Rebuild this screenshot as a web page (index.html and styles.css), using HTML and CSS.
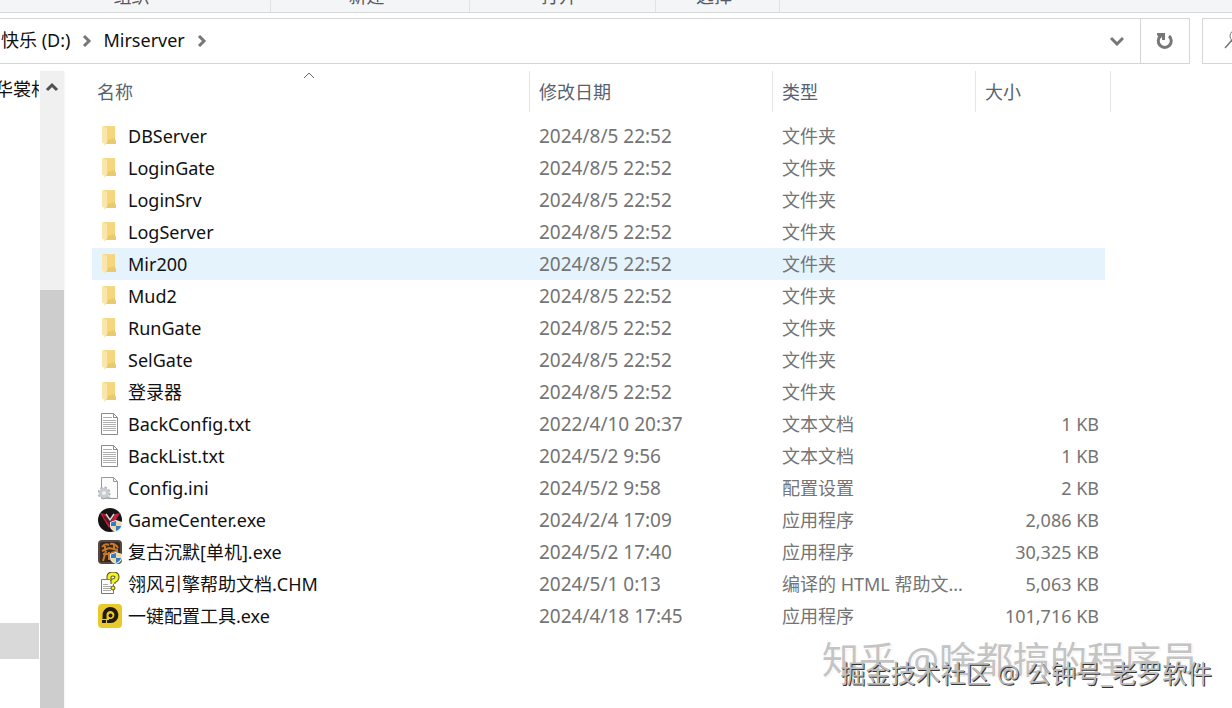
FILE: index.html
```html
<!DOCTYPE html>
<html lang="zh-CN">
<head>
<meta charset="utf-8">
<title>Mirserver</title>
<link rel="stylesheet" href="styles.css">
</head>
<body>
<svg class="defs" aria-hidden="true">
  <symbol id="folder" viewBox="0 0 24 24">
    <path d="M5 2h12v14l1 1v3H7z" fill="#f6d98a"/>
    <path d="M8 4l9-1v13l1 1v3H8z" fill="#f5d67f"/>
    <path d="M10 16l7-2v2l1 1v3H8z" fill="#ebc96c"/>
    <path d="M4 2l5 2v14l-2 4-1-2-2-2z" fill="#fae6ab"/>
  </symbol>
  <symbol id="text" viewBox="0 0 24 24">
    <path d="M3.500 1.500h12l4 4v17h-16z" fill="#fff" stroke="#8b8b8b"/>
    <path d="M15.500 1.500v4h4" fill="none" stroke="#8b8b8b"/>
    <path d="M5 5.500h9M5 8.500h13M5 10.500h13M5 12.500h13M5 14.500h13M5 16.500h13M5 18.500h13" stroke="#b0b0b0"/>
  </symbol>
  <symbol id="config" viewBox="0 0 24 24">
    <path d="M3.500 1.500h12l4 4v17h-16z" fill="#fbfbfb" stroke="#999"/>
    <path d="M15.500 1.500v4h4" fill="none" stroke="#999"/>
    <circle cx="6" cy="17" r="5" fill="#d4d9dc" stroke="#adb4b8" stroke-width="3" stroke-dasharray="2.200 1.700"/>
    <circle cx="6" cy="17" r="5" fill="#c6ccd0"/><circle cx="6" cy="17" r="2" fill="#eef1f2"/>
    <path d="M9 20l4 1-3 2z" fill="#b5bcc0"/>
  </symbol>
  <symbol id="shield" viewBox="0 0 12 12">
    <path d="M6 0l6 2v4q0 4-6 6-6-2-6-6V2z" fill="#e9eef4"/>
    <path d="M6 1v5H1V2.500zM6 6h5q-.5 3-5 5z" fill="#2f7cc9"/>
    <path d="M6 1l5 1.500V6H6zM1 6h5v5Q1 9 1 6z" fill="#f0d9a0"/>
  </symbol>
  <symbol id="game" viewBox="0 0 24 24">
    <circle cx="12" cy="12" r="12" fill="#191315"/>
    <path d="M2 5l5 1 6 11-2 3zM22 5l-5 1-4 7 2 4z" fill="#c3213c"/>
    <path d="M5 6l6 6 2 7-7-9z" fill="#6c101e"/>
    <path d="M8 6l4 6 4-6" fill="none" stroke="#ddd" stroke-width="1.500"/>
    <use href="#shield" x="12" y="12" width="12" height="12"/>
  </symbol>
  <symbol id="retro" viewBox="0 0 24 24">
    <rect width="24" height="24" rx="4" fill="#544943"/>
    <rect x="2" y="2" width="20" height="20" rx="2" fill="#38251c"/>
    <path d="M4 7q3-4 7-2M12 4q5-1 8 4M4 11l7-3 9 2M7 6v5M16 5v5M5 14h8M8 11l-3 10M11 12v8M13 13l7-2" fill="none" stroke="#c77b2a" stroke-width="2"/>
    <use href="#shield" x="12" y="12" width="12" height="12"/>
  </symbol>
  <symbol id="help" viewBox="0 0 24 24">
    <path d="M3.500 7.500h8l4 4v10h-12z" fill="#fff" stroke="#777"/>
    <path d="M5 12.500h5M5 14.500h8M5 16.500h8M5 18.500h8" stroke="#aaa"/>
    <path d="M11 7V5q0-3 4-3t4 3q0 3-4 4v3" fill="none" stroke="#55551a" stroke-width="5"/>
    <path d="M11 7V5q0-3 4-3t4 3q0 3-4 4v3" fill="none" stroke="#f4f02a" stroke-width="3"/>
    <circle cx="15" cy="16" r="2" fill="#f4f02a" stroke="#55551a"/>
  </symbol>
  <symbol id="tool" viewBox="0 0 24 24">
    <rect width="24" height="24" rx="4" fill="#e9c92b"/>
    <path d="M6.500 15v-3a6 6 0 1 1 6 5H11" fill="none" stroke="#211b0b" stroke-width="4"/>
    <circle cx="12.500" cy="11.500" r="2" fill="#211b0b"/>
    <path d="M4 16h4v3H4zM9 16h4v3H9z" fill="#211b0b"/>
  </symbol>
</svg>

<div class="window">
  <header class="ribbon">
    <div class="group organize">组织</div>
    <div class="group create">新建</div>
    <div class="group open">打开</div>
    <div class="group select">选择</div>
  </header>

  <div class="toolbar">
    <nav class="address" aria-label="地址">
      <a class="crumb" href="#">快乐 (D:)</a>
      <svg class="sep" viewBox="0 0 10 12"><path d="M2 1l5 5-5 5"/></svg>
      <a class="crumb" href="#">Mirserver</a>
      <svg class="sep" viewBox="0 0 10 12"><path d="M2 1l5 5-5 5"/></svg>
      <button class="history" aria-label="历史记录"><svg width="14" height="10" viewBox="0 0 14 10"><path d="M1 2l6 6 6-6" fill="none" stroke="#777" stroke-width="3"/></svg></button>
      <button class="refresh" aria-label="刷新"><svg width="18" height="18" viewBox="0 0 18 18"><path d="M13 4a6.500 6.500 0 1 1-8.500 0" fill="none" stroke="#777" stroke-width="3"/><path d="M1 1h8v7H6V5L4 6 1 3z" fill="#777"/></svg></button>
    </nav>
    <button class="search" aria-label="搜索"><svg width="22" height="22" viewBox="0 0 22 22"><path d="M2 19l7-8" stroke="#777" stroke-width="1.500"/><circle cx="13" cy="7" r="6" fill="none" stroke="#777"/></svg></button>
  </div>

  <main class="content">
    <aside class="tree">
      <a class="node" href="#">华裳村</a>
      <div class="node-selected"></div>
    </aside>
    <div class="scrollbar">
      <button class="scroll-up" aria-label="向上滚动"><svg width="14" height="10" viewBox="0 0 14 10"><path d="M2 8l5-5 5 5" fill="none" stroke="#505050" stroke-width="3"/></svg></button>
      <div class="thumb"></div>
    </div>
    <section class="files">
      <svg class="sort" width="12" height="7" viewBox="0 0 12 7"><path d="M1 6l5-5 5 5" fill="none" stroke="#666"/></svg>
      <table>
        <colgroup><col><col class="c-date"><col class="c-type"><col class="c-size"><col class="c-end"></colgroup>
        <thead><tr><th>名称</th><th>修改日期</th><th>类型</th><th colspan="2">大小</th></tr></thead>
        <tbody>
          <tr><td><span class="name"><svg><use href="#folder"/></svg>DBServer</span></td><td>2024/8/5 22:52</td><td>文件夹</td><td></td></tr>
          <tr><td><span class="name"><svg><use href="#folder"/></svg>LoginGate</span></td><td>2024/8/5 22:52</td><td>文件夹</td><td></td></tr>
          <tr><td><span class="name"><svg><use href="#folder"/></svg>LoginSrv</span></td><td>2024/8/5 22:52</td><td>文件夹</td><td></td></tr>
          <tr><td><span class="name"><svg><use href="#folder"/></svg>LogServer</span></td><td>2024/8/5 22:52</td><td>文件夹</td><td></td></tr>
          <tr class="hover"><td><span class="name"><svg><use href="#folder"/></svg>Mir200</span></td><td>2024/8/5 22:52</td><td>文件夹</td><td></td></tr>
          <tr><td><span class="name"><svg><use href="#folder"/></svg>Mud2</span></td><td>2024/8/5 22:52</td><td>文件夹</td><td></td></tr>
          <tr><td><span class="name"><svg><use href="#folder"/></svg>RunGate</span></td><td>2024/8/5 22:52</td><td>文件夹</td><td></td></tr>
          <tr><td><span class="name"><svg><use href="#folder"/></svg>SelGate</span></td><td>2024/8/5 22:52</td><td>文件夹</td><td></td></tr>
          <tr><td><span class="name"><svg><use href="#folder"/></svg>登录器</span></td><td>2024/8/5 22:52</td><td>文件夹</td><td></td></tr>
          <tr><td><span class="name"><svg><use href="#text"/></svg>BackConfig.txt</span></td><td>2022/4/10 20:37</td><td>文本文档</td><td>1 KB</td></tr>
          <tr><td><span class="name"><svg><use href="#text"/></svg>BackList.txt</span></td><td>2024/5/2 9:56</td><td>文本文档</td><td>1 KB</td></tr>
          <tr><td><span class="name"><svg><use href="#config"/></svg>Config.ini</span></td><td>2024/5/2 9:58</td><td>配置设置</td><td>2 KB</td></tr>
          <tr><td><span class="name"><svg><use href="#game"/></svg>GameCenter.exe</span></td><td>2024/2/4 17:09</td><td>应用程序</td><td>2,086 KB</td></tr>
          <tr><td><span class="name"><svg><use href="#retro"/></svg>复古沉默[单机].exe</span></td><td>2024/5/2 17:40</td><td>应用程序</td><td>30,325 KB</td></tr>
          <tr><td><span class="name"><svg><use href="#help"/></svg>翎风引擎帮助文档.CHM</span></td><td>2024/5/1 0:13</td><td>编译的 HTML 帮助文...</td><td>5,063 KB</td></tr>
          <tr><td><span class="name"><svg><use href="#tool"/></svg>一键配置工具.exe</span></td><td>2024/4/18 17:45</td><td>应用程序</td><td>101,716 KB</td></tr>
        </tbody>
      </table>
    </section>
  </main>
  <div class="mark mark-back">知乎 @啥都搞的程序员</div>
  <div class="mark mark-front">掘金技术社区 @ 公钟号_老罗软件</div>
</div>
</body>
</html>
```
FILE: styles.css
```css
* { box-sizing: border-box; }
body {
  margin: 0;
  background: #fff;
  color: #111;
  font: 18px/24px "Noto Sans", "Noto Sans CJK SC", sans-serif;
}
button { border: 0; padding: 0; background: none; }
a { color: inherit; text-decoration: none; }
.defs { display: none; }
.window {
  position: relative;
  display: flex;
  flex-direction: column;
  height: 100vh;
  overflow: hidden;
}

.ribbon {
  display: flex;
  align-items: flex-end;
  flex: none;
  height: 13px;
  overflow: hidden;
  background: #f4f5f7;
  border-bottom: 1px solid #d5d7d9;
  color: #555a60;
}
.group {
  height: 36px;
  padding: 0 7px 4px 0;
  display: flex;
  align-items: flex-end;
  justify-content: center;
  border-right: 1px solid #e0e2e4;
}
.organize { width: 271px; }
.create { width: 199px; }
.open { width: 186px; }
.select { width: 124px; }

.toolbar { display: flex; flex: none; gap: 12px; padding-top: 5px; }
.address {
  flex: 1;
  display: flex;
  align-items: center;
  height: 46px;
  padding-left: 1px;
  border: 1px solid #d5d5d5;
  border-left: 0;
}
.crumb { padding-bottom: 2px; }
.sep { width: 10px; height: 12px; margin: 0 11px 0 12px; fill: none; stroke: #777; stroke-width: 3; }
.history { margin-left: auto; width: 46px; }
.refresh { width: 49px; height: 44px; border-left: 1px solid #d5d5d5; }
.history svg, .refresh svg, .scroll-up svg { display: block; margin: auto; }
.search {
  width: 30px;
  height: 46px;
  padding-left: 20px;
  border: 1px solid #d5d5d5;
  border-right: 0;
  overflow: hidden;
}

.content { flex: 1; display: flex; min-height: 0; padding-top: 7px; }
.tree { width: 40px; padding-right: 1px; overflow: hidden; white-space: nowrap; }
.node { display: block; height: 36px; line-height: 36px; text-indent: -5px; overflow: hidden; }
.node-selected { height: 36px; margin-top: 516px; background: #d9d9d9; }
.scrollbar {
  display: flex;
  flex-direction: column;
  width: 25px;
  background: #f0f0f0;
  border-right: 1px solid #f7f7f7;
}
.scroll-up { height: 32px; }
.thumb { flex: 1; margin-top: 187px; background: #cdcdcd; }

.files { position: relative; flex: 1; padding: 0 121px 0 27px; }
.sort { position: absolute; left: 238px; top: 1px; }
table { width: 100%; table-layout: fixed; border-collapse: separate; border-spacing: 0; }
.c-date { width: 243px; }
.c-type { width: 203px; }
.c-size { width: 129px; }
.c-end { width: 6px; }
th {
  height: 41px;
  padding: 0 0 0 9px;
  border-right: 1px solid #e5e5e5;
  color: #56636f;
  font-weight: 400;
  text-align: left;
}
th:first-child { padding-left: 5px; }
tbody::before { content: ""; display: table-row; height: 8px; }
td { height: 32px; padding: 0 0 0 9px; color: #747474; white-space: nowrap; }
td:first-child { padding-left: 6px; color: #111; }
td:nth-child(2) { font-size: 19px; }
td:nth-child(4) { padding-right: 6px; text-align: right; }
.name { display: flex; align-items: center; gap: 6px; }
.name svg { width: 24px; height: 24px; }
.hover td { background: #e5f3fd; }

.mark { position: absolute; white-space: nowrap; pointer-events: none; }
.mark-back {
  right: 34px;
  bottom: 26px;
  font-size: 37px;
  line-height: 44px;
  color: #c4c4c4;
  text-shadow: 1px 1px 0 #fff, 1px 1px 2px #ddd;
}
.mark-front {
  right: 20px;
  bottom: 19px;
  font-size: 25px;
  line-height: 32px;
  color: #bbb;
  text-shadow: 1px 1px 0 #333;
}
```
